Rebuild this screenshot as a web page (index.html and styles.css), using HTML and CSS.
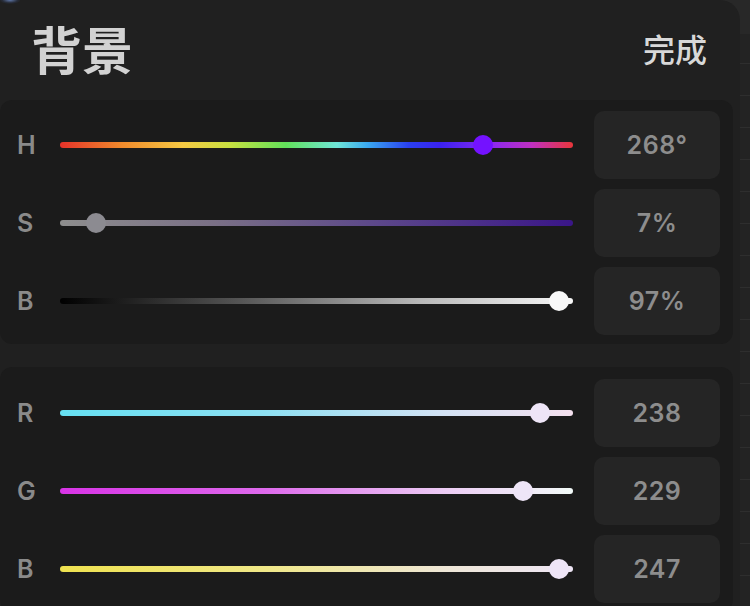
FILE: index.html
```html
<!DOCTYPE html>
<html lang="zh">
<head>
<meta charset="utf-8">
<title>背景</title>
<link rel="stylesheet" href="styles.css">
</head>
<body>
<div class="sheet">
  <div class="panel">
    <header class="header">
      <h1 class="title">背景</h1>
      <button class="done">完成</button>
    </header>
    <section class="group">
      <div class="row">
        <span class="label">H</span>
        <div class="track hue"><span class="thumb t-hue" style="left:82.46%"></span></div>
        <div class="value">268°</div>
      </div>
      <div class="row">
        <span class="label">S</span>
        <div class="track sat"><span class="thumb t-sat" style="left:7.02%"></span></div>
        <div class="value">7%</div>
      </div>
      <div class="row">
        <span class="label">B</span>
        <div class="track bri"><span class="thumb t-white" style="left:97.27%"></span></div>
        <div class="value">97%</div>
      </div>
    </section>
    <section class="group">
      <div class="row">
        <span class="label">R</span>
        <div class="track red"><span class="thumb t-rgb" style="left:93.57%"></span></div>
        <div class="value">238</div>
      </div>
      <div class="row">
        <span class="label">G</span>
        <div class="track green"><span class="thumb t-rgb" style="left:90.25%"></span></div>
        <div class="value">229</div>
      </div>
      <div class="row">
        <span class="label">B</span>
        <div class="track blue"><span class="thumb t-rgb" style="left:97.27%"></span></div>
        <div class="value">247</div>
      </div>
    </section>
  </div>
  <div class="ruler"></div>
</div>
</body>
</html>
```
FILE: styles.css
```css
* { box-sizing: border-box; }
html, body {
  margin: 0;
  padding: 0;
  width: 750px;
  height: 606px;
  overflow: hidden;
  background: #282828;
  font-family: "Inter", "Noto Sans CJK SC", sans-serif;
}
.sheet {
  display: flex;
  height: 606px;
}
.panel {
  position: relative;
  width: 740px;
  flex: none;
  background: #202020;
  border-top-right-radius: 20px;
  padding-right: 7px;
}
.panel::before {
  content: "";
  position: absolute;
  left: 0;
  top: 0;
  width: 20px;
  height: 6px;
  background: radial-gradient(ellipse 11px 4px at 10px 0, rgba(110,140,200,0.8), rgba(60,80,130,0.25) 70%, transparent 100%);
}
.ruler {
  flex: 1;
  background-color: #232323;
  background-image: repeating-linear-gradient(to bottom, transparent 0 29px, #2e2e2e 29px 30px, transparent 30px 32px);
  margin-top: 34px;
}
.header {
  height: 100px;
  display: flex;
  align-items: center;
  justify-content: space-between;
  padding: 0 26px 4px 31px;
}
.title {
  margin: 0;
  font-family: "Noto Sans CJK SC", sans-serif;
  font-size: 51px;
  font-weight: 700;
  color: #d2d2d2;
  letter-spacing: 0;
  line-height: 1;
}
.done {
  border: 0;
  background: none;
  padding: 0;
  font-family: "Noto Sans CJK SC", sans-serif;
  font-size: 32px;
  font-weight: 500;
  color: #d8d8d8;
  line-height: 1;
}
.group {
  background: #1b1b1b;
  border-radius: 12px;
  padding: 11px 13px 9px 16px;
  display: flex;
  flex-direction: column;
  gap: 10px;
}
.group + .group {
  margin-top: 23px;
  padding-top: 12px;
}
.row {
  height: 68px;
  display: flex;
  align-items: center;
}
.label {
  width: 44px;
  flex: none;
  font-size: 25px;
  font-weight: 600;
  color: #8a8a8a;
  padding-left: 1px;
}
.track {
  position: relative;
  flex: 1;
  height: 6px;
  border-radius: 3px;
  margin-right: 21px;
}
.thumb {
  position: absolute;
  top: 50%;
  width: 20px;
  height: 20px;
  border-radius: 50%;
  transform: translate(-50%, -50%);
}
.hue {
  background: linear-gradient(to right, #e5322a 0%, #f08a2c 12%, #f6c943 24%, #c8e040 33%, #62e05a 44%, #6ee6d8 54%, #3aa8f0 60%, #2a40f0 68%, #3a22f0 74%, #8a28f0 84%, #c030c0 92%, #e8363a 100%);
}
.sat {
  background: linear-gradient(to right, #8e8e8e 0%, #7a7086 30%, #5e4a8a 60%, #3a1688 100%);
}
.bri {
  background: linear-gradient(to right, #000 0%, #555 35%, #b8b8b8 70%, #f8f8f8 100%);
}
.red {
  background: linear-gradient(to right, #66e0f2 0%, #8ee0f2 40%, #d4e2f4 75%, #f4e0ee 100%);
}
.green {
  background: linear-gradient(to right, #d834e6 0%, #de6aec 40%, #ecccf4 75%, #f2faf8 100%);
}
.blue {
  background: linear-gradient(to right, #efe250 0%, #f0e888 40%, #eee6d6 75%, #eee6f6 100%);
}
.t-hue { background: #7412ff; }
.t-sat { background: #8c8b91; }
.t-white { background: #f8f8f8; }
.t-rgb { background: #eee5f7; }
.value {
  width: 126px;
  height: 68px;
  flex: none;
  background: #252525;
  border-radius: 10px;
  display: flex;
  align-items: center;
  justify-content: center;
  font-size: 25px;
  font-weight: 600;
  color: #8d8d8d;
  letter-spacing: 0.5px;
}
```
